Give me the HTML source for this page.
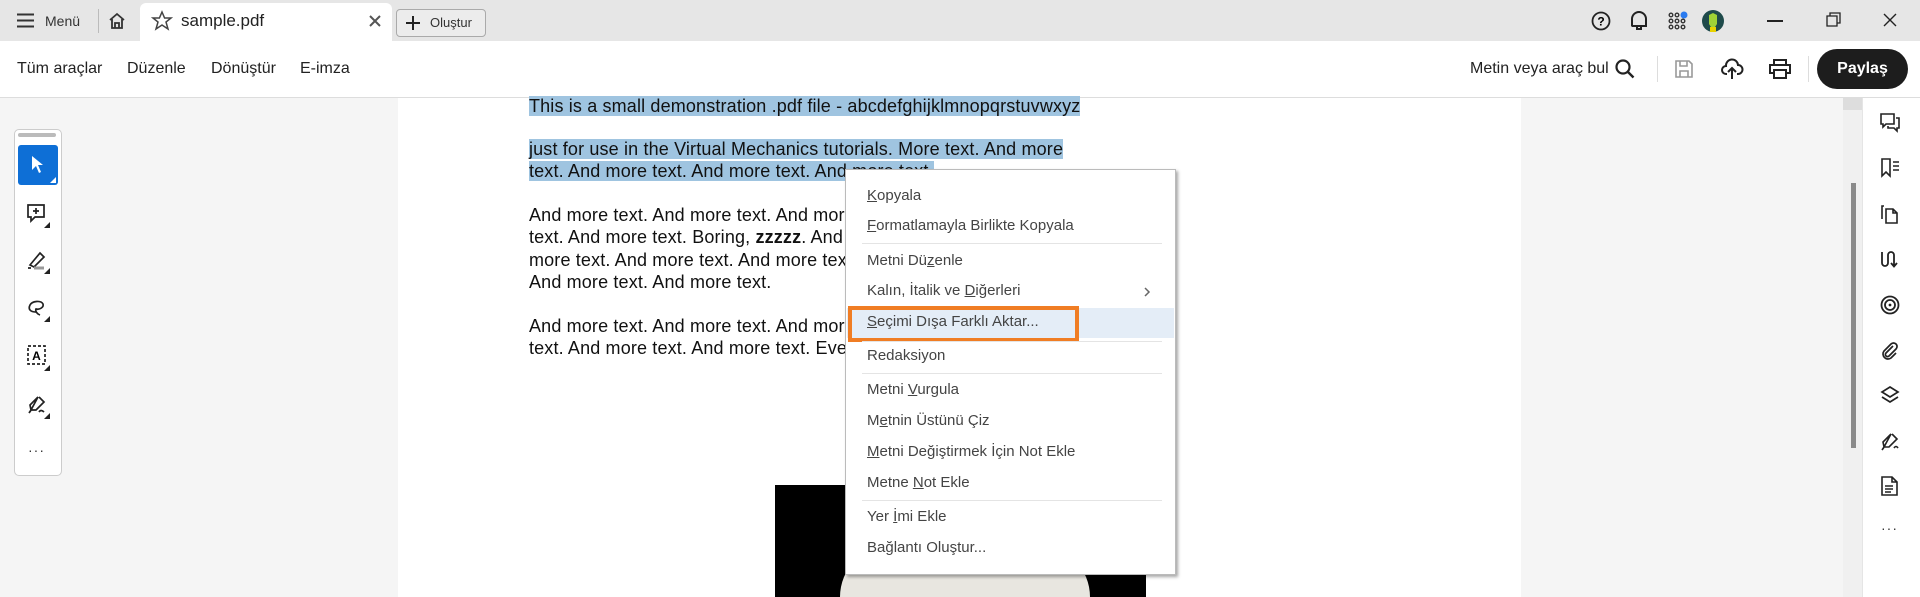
<!DOCTYPE html>
<html><head><meta charset="utf-8"><style>
*{margin:0;padding:0;box-sizing:border-box}
html,body{width:1920px;height:597px;overflow:hidden}
body{background:#f5f5f5;font-family:"Liberation Sans",Arial,sans-serif;position:relative;color:#222}
.abs{position:absolute}
#title{left:0;top:0;width:1920px;height:41px;background:#e6e6e6}
#tool{left:0;top:41px;width:1920px;height:57px;background:#fff;border-bottom:1px solid #ddd}
.t{position:absolute;white-space:nowrap}
#page{left:398px;top:98px;width:1123px;height:499px;background:#fff}
.pl{position:absolute;left:529px;font-size:18px;letter-spacing:0.15px;color:#111;white-space:nowrap;line-height:22px}
.hl{background:#9fc4e0}
#menu{left:845px;top:169px;width:331px;height:406px;background:#fff;border:1px solid #bbb;box-shadow:2px 2px 3px rgba(0,0,0,.35)}
.mi{position:absolute;left:21px;font-size:15px;color:#444;white-space:nowrap}
.sep{position:absolute;left:16px;width:300px;height:1px;background:#e4e4e4}
svg{position:absolute;overflow:visible}
</style></head><body>
<div id="title" class="abs">
 <svg style="left:17px;top:13px" width="18" height="15"><path d="M0 1.5H17M0 7.5H17M0 13.5H17" stroke="#333" stroke-width="2"/></svg>
 <div class="t" style="left:45px;top:13px;font-size:14px;color:#333">Menü</div>
 <div class="abs" style="left:98px;top:9px;width:1px;height:24px;background:#bbb"></div>
 <svg style="left:108px;top:12px" width="18" height="18"><path d="M2 8L9 2L16 8M4 7V16H14V7M7 16V11H11V16" fill="none" stroke="#333" stroke-width="1.8"/></svg>
 <div class="abs" style="left:140px;top:3px;width:252px;height:38px;background:#fff;border-radius:6px 6px 0 0"></div>
 <svg style="left:152px;top:11px" width="20" height="20"><path d="M10 1L12.6 7H19L14 11L16 18L10 14L4 18L6 11L1 7H7.4Z" fill="none" stroke="#444" stroke-width="1.5"/></svg>
 <div class="t" style="left:181px;top:11px;font-size:17px;color:#222">sample.pdf</div>
 <svg style="left:369px;top:15px" width="12" height="12"><path d="M1 1L11 11M11 1L1 11" stroke="#555" stroke-width="2"/></svg>
 <div class="abs" style="left:396px;top:9px;width:90px;height:28px;border:1px solid #aaa;border-radius:4px;background:#ececec"></div>
 <svg style="left:406px;top:16px" width="14" height="14"><path d="M7 0V14M0 7H14" stroke="#222" stroke-width="2"/></svg>
 <div class="t" style="left:430px;top:15px;font-size:13px;color:#333">Oluştur</div>
 <svg style="left:1591px;top:11px" width="20" height="20"><circle cx="10" cy="10" r="8.5" fill="none" stroke="#222" stroke-width="1.8"/><text x="10" y="14.5" font-size="12" font-weight="bold" text-anchor="middle" font-family="Liberation Sans">?</text></svg>
 <svg style="left:1629px;top:10px" width="20" height="22"><path d="M3 16V9A7 7 0 0 1 17 9V16H2.5H17.5M8 16V19H12V16" fill="none" stroke="#222" stroke-width="2"/></svg>
 <svg style="left:1668px;top:12px" width="20" height="20"><g fill="none" stroke="#333" stroke-width="1.4"><circle cx="3" cy="3" r="1.8"/><circle cx="9" cy="3" r="1.8"/><circle cx="3" cy="9" r="1.8"/><circle cx="9" cy="9" r="1.8"/><circle cx="15" cy="9" r="1.8"/><circle cx="3" cy="15" r="1.8"/><circle cx="9" cy="15" r="1.8"/><circle cx="15" cy="15" r="1.8"/></g><circle cx="16" cy="3" r="3.5" fill="#2a7bf0"/></svg>
 <svg style="left:1702px;top:10px" width="22" height="22"><circle cx="11" cy="11" r="11" fill="#1e4a4a"/><path d="M7 5L11 3L15 5L15 14L11 20L7 14Z" fill="#9fd236"/><rect x="8" y="17" width="6" height="5" fill="#e8d200"/></svg>
 <div class="abs" style="left:1767px;top:20px;width:16px;height:1.5px;background:#222"></div>
 <svg style="left:1826px;top:12px" width="15" height="15"><path d="M1 4H11V14H1Z M4 4V1H14V11H11" fill="none" stroke="#222" stroke-width="1.3"/></svg>
 <svg style="left:1883px;top:13px" width="14" height="14"><path d="M1 1L13 13M13 1L1 13" stroke="#222" stroke-width="1.4"/></svg>
</div>
<div id="tool" class="abs">
 <div class="t" style="left:17px;top:19px;font-size:16px">Tüm araçlar</div>
 <div class="t" style="left:127px;top:19px;font-size:16px">Düzenle</div>
 <div class="t" style="left:211px;top:19px;font-size:16px">Dönüştür</div>
 <div class="t" style="left:300px;top:19px;font-size:16px">E-imza</div>
 <div class="t" style="left:1470px;top:19px;font-size:16px">Metin veya araç bul</div>
 <svg style="left:1615px;top:18px" width="20" height="20"><circle cx="8" cy="8" r="6.5" fill="none" stroke="#222" stroke-width="2.2"/><path d="M13 13L18.5 18.5" stroke="#222" stroke-width="2.4"/></svg>
 <div class="abs" style="left:1657px;top:15px;width:1px;height:26px;background:#ddd"></div>
 <svg style="left:1675px;top:19px" width="18" height="18"><path d="M1 1H14L17 4V17H1Z M5 1V6H12V1 M5 17V11H13V17" fill="none" stroke="#999" stroke-width="1.6"/></svg>
 <svg style="left:1721px;top:17px" width="22" height="22"><path d="M6 16H5A4 4 0 0 1 5 8A6 6 0 0 1 17 7A4.5 4.5 0 0 1 17 16H16M11 21V10M7 14L11 10L15 14" fill="none" stroke="#222" stroke-width="2"/></svg>
 <svg style="left:1769px;top:18px" width="22" height="20"><path d="M5 6V1H17V6M5 14H1V6H21V14H17M5 11H17V19H5Z" fill="none" stroke="#222" stroke-width="2"/></svg>
 <div class="abs" style="left:1808px;top:15px;width:1px;height:26px;background:#ddd"></div>
 <div class="abs" style="left:1817px;top:8px;width:91px;height:40px;background:#1d1d1d;border-radius:20px;color:#fff;font-size:16px;font-weight:bold;text-align:center;line-height:40px">Paylaş</div>
</div>
<div id="page" class="abs"></div>
<div class="abs" style="left:1521px;top:98px;width:322px;height:499px;background:#f5f5f5"></div>
<div class="abs" style="left:1843px;top:98px;width:19px;height:499px;background:#f0f0f0"></div>
<div class="abs" style="left:1843px;top:98px;width:19px;height:12px;background:#ddd"></div>
<div class="abs" style="left:1851px;top:183px;width:5px;height:265px;background:#8a8a8a"></div>
<div class="abs" style="left:1862px;top:98px;width:58px;height:499px;background:#fff;border-left:1px solid #e5e5e5"></div>
<svg style="left:1880px;top:113px" width="20" height="20"><path d="M1 1H14V11H6L3 14V11H1Z M16 5H19V15H17V18L14 15H8V13" fill="none" stroke="#222" stroke-width="1.6"/></svg>
<svg style="left:1880px;top:158px" width="20" height="20"><path d="M2 1H10V18L6 14L2 18Z M13 4H19M13 8H19M13 12H19" fill="none" stroke="#222" stroke-width="1.6"/></svg>
<svg style="left:1880px;top:204px" width="20" height="20"><path d="M4 2H2V15 M6 5H13L17 9V19H6Z M13 5V9H17" fill="none" stroke="#222" stroke-width="1.6"/></svg>
<svg style="left:1880px;top:249px" width="20" height="20"><path d="M2 3V14A3 3 0 0 0 8 14V6A3 3 0 0 1 14 6V17M11 14L14 17.5L17 14" fill="none" stroke="#222" stroke-width="1.8"/></svg>
<svg style="left:1880px;top:295px" width="20" height="20"><circle cx="10" cy="10" r="8.5" fill="none" stroke="#222" stroke-width="1.8"/><circle cx="10" cy="10" r="5" fill="none" stroke="#222" stroke-width="1.8"/><circle cx="10" cy="10" r="1.4" fill="#222"/></svg>
<svg style="left:1880px;top:340px" width="20" height="20"><path d="M13 6L6 13A2 2 0 0 0 9 16L16 9A3.5 3.5 0 0 0 11 4L4 11A5 5 0 0 0 11 18L16 13" fill="none" stroke="#222" stroke-width="1.7"/></svg>
<svg style="left:1880px;top:386px" width="20" height="20"><path d="M10 1L18 6L10 11L2 6Z M2 11L10 16L18 11" fill="none" stroke="#222" stroke-width="1.7"/></svg>
<svg style="left:1880px;top:432px" width="20" height="20"><path d="M12 2L17 7L9 15L4 15L2 18M4 15L3 10L11 2Z M14 16Q16 13 18 16" fill="none" stroke="#222" stroke-width="1.6"/></svg>
<svg style="left:1881px;top:476px" width="18" height="20"><path d="M1 1H11L16 6V19H1Z M11 1V6H16 M4 10H12M4 13H12M4 16H10" fill="none" stroke="#222" stroke-width="1.6"/></svg>
<div class="t" style="left:1881px;top:520px;font-size:14px;letter-spacing:1px;color:#333">···</div>
<div class="abs" style="left:14px;top:129px;width:48px;height:347px;background:#fff;border:1px solid #ccc;border-radius:5px"></div>
<div class="abs" style="left:18px;top:133px;width:38px;height:4px;background:#bbb;border-radius:2px"></div>
<div class="abs" style="left:18px;top:145px;width:40px;height:40px;background:#0e6fd6;border-radius:3px"></div>
<svg style="left:31px;top:155px" width="14" height="20"><path d="M1 1V15L5 11L8 18L10 17L7 10H12Z" fill="#fff"/></svg>
<svg style="left:50px;top:177px" width="6" height="6"><path d="M6 0V6H0Z" fill="#fff"/></svg>
<svg style="left:27px;top:204px" width="30" height="26"><path d="M1 1H17V13H8L4 17V13H1Z M9 4V10M6 7H12" fill="none" stroke="#222" stroke-width="1.7"/><path d="M23 18V24H17Z" fill="#222"/></svg>
<svg style="left:27px;top:250px" width="30" height="26"><path d="M3 15L13 3L17 7L7 17Z M1 18H4" fill="none" stroke="#222" stroke-width="1.7"/><path d="M7 18H17" stroke="#999" stroke-width="3"/><path d="M23 18V24H17Z" fill="#222"/></svg>
<svg style="left:27px;top:298px" width="30" height="26"><path d="M9 14C3 14 1 11 3 7C5 3 14 2 16 6C17 9 13 12 9 11C8 13 10 16 13 17" fill="none" stroke="#222" stroke-width="1.7"/><path d="M23 18V24H17Z" fill="#222"/></svg>
<svg style="left:27px;top:345px" width="30" height="28"><rect x="1" y="1" width="17" height="18" fill="none" stroke="#222" stroke-width="1.7" stroke-dasharray="3 2"/><text x="9.5" y="15" font-size="12" font-weight="bold" text-anchor="middle" font-family="Liberation Sans">A</text><path d="M23 20V26H17Z" fill="#222"/></svg>
<svg style="left:27px;top:395px" width="30" height="26"><path d="M12 2L17 7L9 15L4 15L2 18M4 15L3 10L11 2Z M12 17Q14 14 17 17" fill="none" stroke="#222" stroke-width="1.7"/><path d="M23 18V24H17Z" fill="#222"/></svg>
<div class="t" style="left:28px;top:442px;font-size:14px;letter-spacing:1px;color:#333">···</div>
<div class="pl" style="top:95px"><span class="hl">This is a small demonstration .pdf file - abcdefghijklmnopqrstuvwxyz</span></div>
<div class="pl" style="top:138px"><span class="hl">just for use in the Virtual Mechanics tutorials. More text. And more</span></div>
<div class="pl" style="top:160px"><span class="hl">text. And more text. And more text. And more text. </span></div>
<div class="pl" style="top:204px">And more text. And more text. And more text. And more text. And more</div>
<div class="pl" style="top:226px">text. And more text. Boring, <b style="font-family:'Liberation Sans',sans-serif">zzzzz</b>. And more text. And more text. And</div>
<div class="pl" style="top:249px">more text. And more text. And more text. And more text. And more text.</div>
<div class="pl" style="top:271px">And more text. And more text.</div>
<div class="pl" style="top:315px">And more text. And more text. And more text. And more text. And more</div>
<div class="pl" style="top:337px">text. And more text. And more text. Even more. Continued on page 2 ...</div>
<div class="abs" style="left:775px;top:485px;width:371px;height:112px;background:#000;overflow:hidden">
 <div class="abs" style="left:65px;top:60px;width:250px;height:52px;border-radius:125px 125px 0 0;background:#e8e6e0"></div>
 <div class="abs" style="left:160px;top:45px;width:150px;height:30px;border-radius:75px 75px 0 0;background:#e8e21a"></div>
</div>
<div id="menu" class="abs">
 <div class="abs" style="left:1px;top:138px;width:327px;height:30px;background:#e4edf7"></div>
 <div class="abs" style="left:2px;top:136px;width:231px;height:36px;border:4px solid #f07d24"></div>
 <div class="mi" style="top:17px"><u>K</u>opyala</div>
 <div class="mi" style="top:47px"><u>F</u>ormatlamayla Birlikte Kopyala</div>
 <div class="sep" style="top:73px"></div>
 <div class="mi" style="top:82px">Metni Dü<u>z</u>enle</div>
 <div class="mi" style="top:112px">Kalın, İtalik ve <u>D</u>iğerleri</div>
 <svg style="left:298px;top:117px" width="6" height="10"><path d="M1 1L5 5L1 9" fill="none" stroke="#666" stroke-width="1.5"/></svg>
 <div class="mi" style="top:143px"><u>S</u>eçimi Dışa Farklı Aktar...</div>
 <div class="sep" style="top:171px"></div>
 <div class="mi" style="top:177px">Redaksiyon</div>
 <div class="sep" style="top:203px"></div>
 <div class="mi" style="top:211px">Metni <u>V</u>urgula</div>
 <div class="mi" style="top:242px">M<u>e</u>tnin Üstünü Çiz</div>
 <div class="mi" style="top:273px"><u>M</u>etni Değiştirmek İçin Not Ekle</div>
 <div class="mi" style="top:304px">Metne <u>N</u>ot Ekle</div>
 <div class="sep" style="top:330px"></div>
 <div class="mi" style="top:338px">Yer <u>İ</u>mi Ekle</div>
 <div class="mi" style="top:369px">Ba<u>ğ</u>lantı Oluştur...</div>
</div>
</body></html>
